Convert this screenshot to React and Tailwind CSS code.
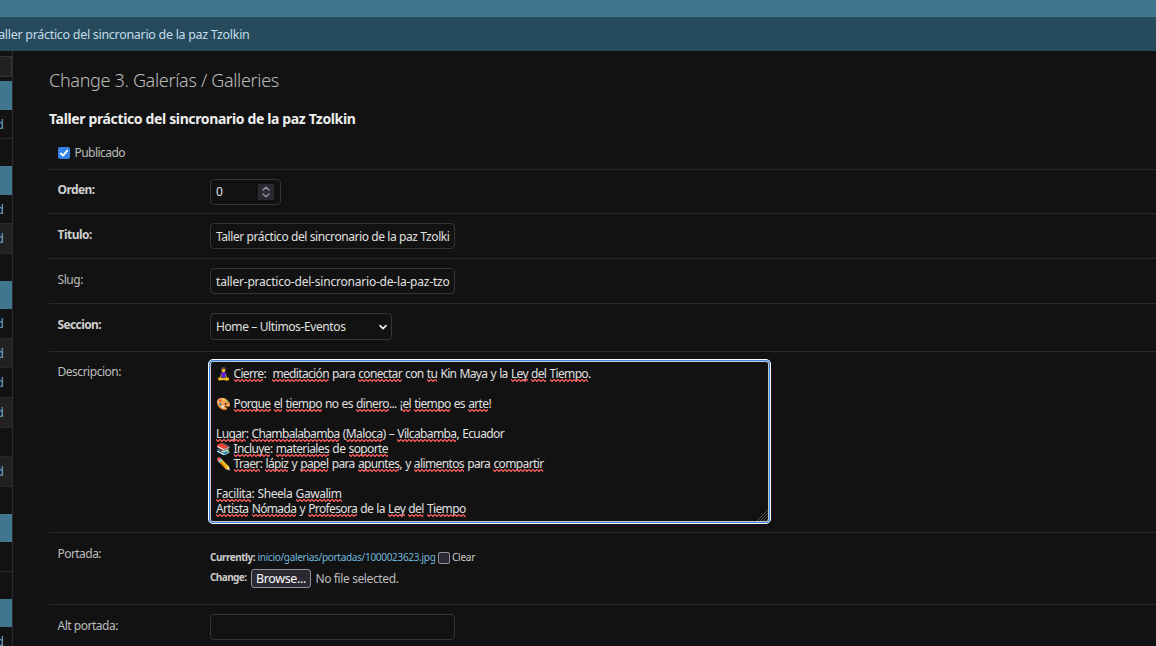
import React, { useLayoutEffect, useRef, useState } from 'react'

/* Single line of text whose tracking is tuned so that it fills `w` pixels. */
function Fit({ w, className = '', children }) {
  const ref = useRef(null)
  const [spacing, setSpacing] = useState(0)
  useLayoutEffect(() => {
    const el = ref.current
    const n = el.textContent.length
    setSpacing((w - el.getBoundingClientRect().width) / n)
  }, [w])
  return (
    <span ref={ref} className={`inline-block whitespace-pre ${className}`} style={{ letterSpacing: spacing }}>
      {children}
    </span>
  )
}

function Misspelled({ children }) {
  return (
    <span className="relative">
      {children}
      <svg className="absolute bottom-0 left-0 h-[3px] w-full" aria-hidden="true">
        <defs>
          <pattern id="squiggle" width="4" height="3" patternUnits="userSpaceOnUse">
            <path d="M-1 0.5 L0 0.5 L2 2.5 L4 0.5 L5 0.5" fill="none" stroke="#ff5f5f" strokeWidth="1.2" />
          </pattern>
        </defs>
        <rect width="100%" height="3" fill="url(#squiggle)" />
      </svg>
    </span>
  )
}

/* Words wrapped in underscores are flagged by the spell checker. */
const lines = [
  { icon: '🧘‍♀️', w: 357, text: '_Cierre_:  _meditación_ para _conectar_ con _tu_ Kin Maya y la _Ley_ _del_ _Tiempo_.' },
  null,
  { icon: '🎨', w: 257.5, text: '_Porque_ _el_ _tiempo_ no es _dinero_... ¡_el_ _tiempo_ es _arte_!' },
  null,
  { w: 288, text: '_Lugar_: _Chambalabamba_ (_Maloca_) – _Vilcabamba_, Ecuador' },
  { icon: '📚', w: 154.5, text: '_Incluye_: _materiales_ de _soporte_' },
  { icon: '✏️', w: 310, text: '_Traer_: _lápiz_ y _papel_ para _apuntes_, y _alimentos_ para _compartir_' },
  null,
  { w: 125.5, text: '_Facilita_: Sheela _Gawalim_' },
  { w: 249.5, text: '_Artista_ _Nómada_ y _Profesora_ de la _Ley_ _del_ _Tiempo_' },
]

function Line({ line }) {
  if (!line) return <div className="h-[15px]" />
  return (
    <div className="flex h-[15px] items-center">
      {line.icon && <span className="-ml-[0.5px] w-[18px] shrink-0 text-[12px] leading-[15px]">{line.icon}</span>}
      <Fit w={line.w} className="text-[12px] leading-[15px] [word-spacing:0.7px]">
        {line.text.split('_').map((part, i) => (i % 2 ? <Misspelled key={i}>{part}</Misspelled> : part))}
      </Fit>
    </div>
  )
}

const sidebar = [
  ['h-[29px]', 'head'], ['h-[29px]', 'link'], ['h-[27px]', 'gap'],
  ['h-[29px]', 'head'], ['h-[29px]', 'link'], ['h-[30px]', 'alt'], ['h-[27px]', 'gap'],
  ['h-[28px]', 'head'], ['h-[30px]', 'link'], ['h-[29px]', 'alt'], ['h-[30px]', 'link'], ['h-[30px]', 'alt'],
  ['h-[29px]', 'row'], ['h-[30px]', 'alt'], ['h-[27px]', 'gap'],
  ['h-[28px]', 'head'], ['h-[30px]', 'row'], ['h-[27px]', 'gap'],
  ['h-[28px]', 'head'], ['h-[30px]', 'link'],
]
const tone = {
  head: 'bg-[#417690]',
  link: 'border-b border-[#282828]',
  row: 'border-b border-[#282828]',
  alt: 'border-b border-[#282828] bg-[#212121]',
  gap: '',
}

function Sidebar() {
  return (
    <div className="h-[595px] w-[13px] shrink-0 overflow-hidden border-r border-[#2c2c2c] pt-[5px]">
      <div className="mb-1 h-[21px] border border-l-0 border-[#343434] bg-[#212121]" />
      {sidebar.map(([h, kind], i) => (
        <div key={i} className={`flex items-center justify-end overflow-hidden pr-[8px] ${h} ${tone[kind]}`}>
          {(kind === 'link' || kind === 'alt') && <span className="pt-px text-[12px] text-[#81d4fa]/80">d</span>}
        </div>
      ))}
    </div>
  )
}

function Row({ className, label, w, bold, labelTop = 'pt-[13px]', children }) {
  return (
    <div className={`flex border-b border-[#282828] pl-[8.5px] ${className}`}>
      <div className={`w-[152.5px] shrink-0 text-[12px] leading-[16px] text-[#bdbdbd] ${labelTop}`}>
        <Fit w={w} className={bold ? 'font-bold text-[#cfcfcf]' : ''}>{label}</Fit>
      </div>
      {children}
    </div>
  )
}

const box = 'flex h-[26px] items-center rounded-[4px] border border-[#343434] pl-[5px] text-[12px] text-[#e0e0e0]'

export default function App() {
  return (
    <div className="h-[646px] w-[1156px] overflow-hidden bg-[#121212] font-['Noto_Sans',sans-serif] text-[#eee]">
      <div className="h-[17px] bg-[#417690]" />
      <div className="flex h-[34px] items-center bg-[#264b5d] pt-[2px] text-[#c4dce8]">
        <Fit w={257} className="-ml-[7.5px] text-[12.5px]">Taller práctico del sincronario de la paz Tzolkin</Fit>
      </div>
      <div className="flex">
        <Sidebar />
        <div className="min-w-0 flex-1 pl-[36px]">
          <h1 className="flex h-[58px] items-center text-[18px] font-light leading-none text-[#bcbcbc]">
            <Fit w={230}>Change 3. Galerías / Galleries</Fit>
          </h1>
          <h2 className="flex h-[20px] items-center pb-[2px] text-[14px] font-bold text-[#eeeeee]">
            <Fit w={306.5}>Taller práctico del sincronario de la paz Tzolkin</Fit>
          </h2>
          <div className="mt-[8px] flex h-[33px] items-center border-b border-[#282828] pl-[9px] text-[12px] text-[#bdbdbd]">
            <span className="mr-[4.5px] flex size-[12px] items-center justify-center rounded-[2px] bg-[#3584e4]">
              <svg viewBox="0 0 12 12" className="size-3" fill="none" stroke="#fff" strokeWidth="1.8" strokeLinecap="round" strokeLinejoin="round">
                <path d="M2.8 6.4 5 8.6 9.3 3.6" />
              </svg>
            </span>
            <Fit w={50.5}>Publicado</Fit>
          </div>

          <Row className="h-[44px]" label="Orden:" w={37} bold labelTop="pt-[12px]">
            <div className={`${box} mt-[9px] w-[71px] justify-between pr-[6px]`}>
              <span>0</span>
              <svg viewBox="0 0 16 16" className="size-4 bg-[#2b2a33]" fill="none" stroke="#9b9ba5" strokeWidth="1.3" strokeLinecap="round" strokeLinejoin="round">
                <path d="M5 6 8 3.3 11 6M5 10 8 12.7 11 10" />
              </svg>
            </div>
          </Row>
          <Row className="h-[45px]" label="Titulo:" w={34.5} bold>
            <div className={`${box} mt-[9px] w-[245px] pt-[2px]`}>
              <Fit w={233.5}>Taller práctico del sincronario de la paz Tzolki</Fit>
            </div>
          </Row>
          <Row className="h-[45px]" label="Slug:" w={25.5}>
            <div className={`${box} mt-[9px] w-[245px] pt-[2px]`}>
              <Fit w={233.5}>taller-practico-del-sincronario-de-la-paz-tzo</Fit>
            </div>
          </Row>
          <Row className="h-[48px]" label="Seccion:" w={43.5} bold>
            <div className={`${box} mt-[9px] !h-[27px] w-[182px] justify-between pr-[3px]`}>
              <Fit w={129.5}>Home – Ultimos-Eventos</Fit>
              <svg viewBox="0 0 10 10" className="size-[10px]" fill="none" stroke="#eee" strokeWidth="1.7" strokeLinecap="round" strokeLinejoin="round">
                <path d="M2 3.6 5 6.6 8 3.6" />
              </svg>
            </div>
          </Row>
          <Row className="h-[181px]" label="Descripcion:" w={63.5} labelTop="pt-[12px]">
            <div className="-ml-[2px] mt-[7px] h-[165px] w-[563px] rounded-[5px] border border-white bg-[#3584e4] p-px">
              <div className="relative h-full rounded-[3px] border border-[#c8c8c8] bg-[#121212] pl-[5px] pt-[4px] text-[#e0e0e0]">
                {lines.map((line, i) => <Line key={i} line={line} />)}
                <svg viewBox="0 0 12 12" className="absolute bottom-0 right-0 size-3" stroke="#5c5c5c" strokeWidth="0.9">
                  <path d="M1 12 12 1M4 12 12 4M7 12 12 7M10 12 12 10" />
                </svg>
              </div>
            </div>
          </Row>
          <Row className="h-[72px]" label="Portada:" w={43.5}>
            <div className="pt-[16px] text-[10px] text-[#cccccc]">
              <div className="flex h-[16px] items-center">
                <Fit w={45} className="mr-[2.5px] font-bold">Currently:</Fit>
                <Fit w={178} className="text-[#6fb8dc]">inicio/galerias/portadas/1000023623.jpg</Fit>
                <span className="ml-[2px] mr-[2.5px] mt-[2px] size-[12px] rounded-[2px] border border-[#8f8f9d] bg-[#2b2a33]" />
                <Fit w={23}>Clear</Fit>
              </div>
              <div className="mt-[4px] flex h-[19px] items-center">
                <Fit w={36.5} className="mr-[4.5px] -mt-[3px] font-bold">Change:</Fit>
                <span className="mr-[4.5px] flex h-[19px] w-[60px] items-center justify-center rounded-[3px] border border-[#8f8f9d] bg-[#2b2a33] pt-[2px] text-[12.5px] text-[#fbfbfe]">
                  <Fit w={50}>Browse...</Fit>
                </span>
                <Fit w={83} className="pt-px text-[12px] text-[#bdbdbd]">No file selected.</Fit>
              </div>
            </div>
          </Row>
          <Row className="h-[60px]" label="Alt portada:" w={60.5}>
            <div className={`${box} mt-[9px] w-[245px]`} />
          </Row>
        </div>
      </div>
    </div>
  )
}
